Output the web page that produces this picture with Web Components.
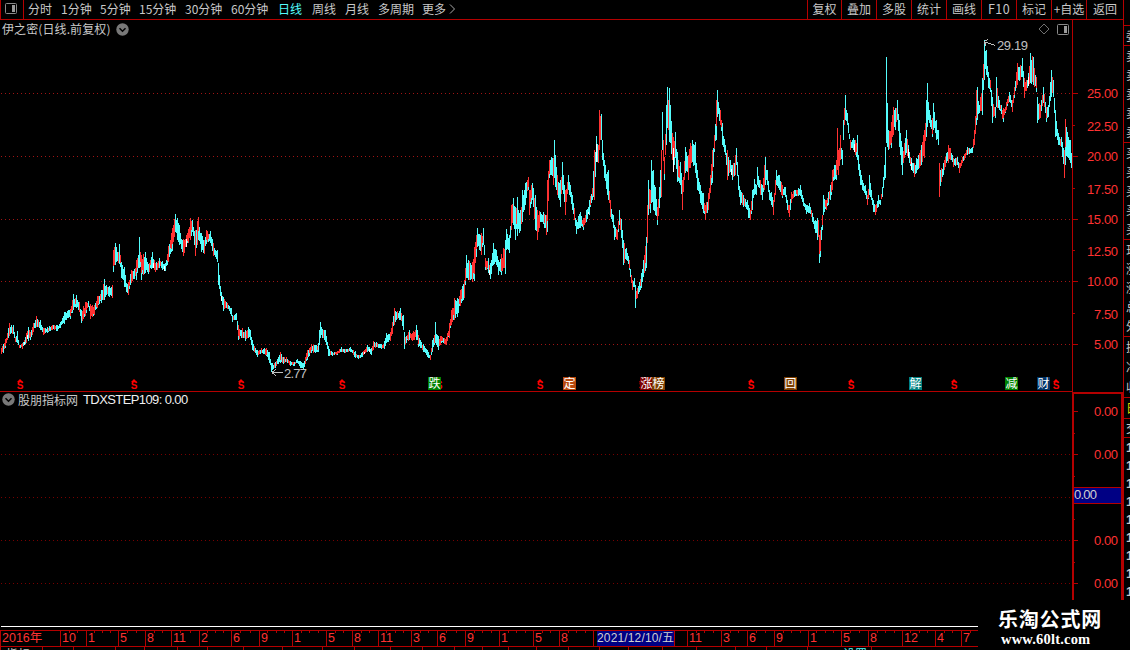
<!DOCTYPE html>
<html lang="zh-CN">
<head>
<meta charset="utf-8">
<title>伊之密 日线</title>
<style>
    body {
        margin: 0;
        background: #000;
        overflow: hidden;
    }
</style>
</head>
<body>
<stock-terminal></stock-terminal>
<script>
const RED = '#b40000';

// [x, high, low] of the price range, in chart pixels
const PRICES = `1 348 354,3 344 353,5 339 348,9 323 336,13 325 334,15 337 342,17 331 343,19 345 348,22 343 349,26 333 343,28 327 341,30 332 340,33 323 332,36 316 327,40 320 330,43 328 335,47 327 333,52 325 330,57 325 331,60 322 328,64 312 324,68 310 318,70 309 319,73 294 310,76 295 308,79 302 312,81 310 323,85 302 316,88 301 307,90 304 319,94 305 315,97 296 308,101 290 303,104 279 300,106 285 295,109 286 297,112 285 298,113 250 272,115 243 265,118 252 263,119 244 264,121 262 278,124 267 287,126 283 292,128 282 295,131 270 283,134 269 279,136 260 280,138 255 268,139 237 268,141 255 280,145 252 273,148 264 274,152 252 268,155 263 272,159 258 268,162 261 270,165 263 271,168 246 262,172 228 251,175 214 232,177 218 240,179 225 245,181 239 249,183 239 256,186 235 247,190 218 240,192 220 232,195 230 256,198 217 240,201 233 252,204 240 254,206 230 244,210 231 243,213 243 256,217 250 262,218 263 285,220 286 296,223 297 311,227 303 309,231 308 316,232 315 322,236 313 320,238 325 340,242 328 338,245 330 341,248 327 338,250 330 340,252 340 350,257 350 357,261 348 353,266 348 356,269 352 363,271 363 372,275 362 368,278 357 364,280 352 363,283 357 364,286 357 362,290 361 366,294 362 366,297 359 363,300 361 368,303 363 370,307 350 360,311 344 353,315 345 353,318 343 352,319 330 345,320 322 338,322 329 338,325 330 342,328 346 356,332 352 356,337 351 355,341 347 352,345 349 353,350 347 352,355 351 358,358 355 359,362 352 357,367 345 352,371 348 355,373 341 350,376 342 347,381 344 349,384 341 349,386 333 343,390 332 341,392 322 334,394 308 325,397 311 319,400 308 320,403 315 330,404 332 349,406 336 343,409 330 340,412 333 341,416 325 340,418 335 347,423 344 352,427 350 357,430 355 360,432 340 352,434 335 345,435 322 343,436 334 345,438 336 350,441 336 343,446 337 345,449 323 338,451 310 325,454 298 320,457 298 317,460 290 306,464 280 298,466 255 278,468 260 280,472 262 282,474 247 281,477 228 247,481 233 255,483 228 245,485 258 270,488 258 273,490 263 279,493 243 265,496 250 265,498 260 275,501 254 275,505 240 274,506 229 250,509 235 253,511 205 230,513 198 225,515 207 240,517 197 236,520 210 231,522 190 222,525 183 205,528 177 190,529 190 215,532 183 200,535 195 230,537 210 240,540 212 222,543 212 224,546 215 235,547 180 232,549 160 178,551 157 175,553 158 185,554 140 178,555 155 187,557 175 195,560 180 207,562 162 190,565 190 215,568 175 190,572 195 210,576 220 234,580 212 228,583 218 230,586 210 222,589 200 215,592 188 200,594 150 200,596 136 162,598 145 163,599 110 150,601 114 140,602 140 160,604 160 178,607 172 195,608 170 200,610 200 217,613 215 228,614 225 240,617 230 240,619 210 225,621 219 238,623 240 265,626 248 260,629 260 270,632 280 290,634 278 287,635 285 308,637 288 298,639 282 292,641 273 288,643 260 277,646 237 268,647 205 243,648 180 215,650 190 213,651 160 203,653 170 210,655 187 215,657 207 225,659 187 208,661 150 197,662 112 150,664 157 180,666 105 145,667 87 128,668 100 130,669 88 142,672 133 160,673 137 172,675 132 158,677 152 182,680 162 185,682 180 210,685 147 173,688 155 180,690 143 168,692 140 162,695 142 173,697 170 190,700 185 203,703 193 213,705 205 220,708 193 210,710 175 193,712 150 183,714 135 152,716 100 140,717 90 117,720 110 125,722 123 145,725 145 155,727 150 180,730 160 172,732 165 180,735 155 175,736 148 165,738 175 190,740 190 205,743 195 207,747 200 210,748 205 218,750 210 220,752 190 210,754 179 195,756 185 195,757 167 185,760 180 195,762 185 200,764 165 190,765 157 185,767 170 185,769 190 200,771 192 205,773 200 215,775 180 195,776 170 185,779 175 190,782 185 198,785 187 197,787 200 210,789 205 217,791 192 203,794 190 197,798 188 196,800 185 196,803 198 206,806 205 214,809 203 213,812 213 222,815 220 233,817 218 240,818 220 237,819 235 263,820 230 257,822 215 230,823 195 215,826 200 210,828 192 205,830 185 200,832 170 190,834 165 180,836 160 180,837 128 170,838 150 175,840 135 160,842 150 165,843 120 140,845 95 120,847 113 125,850 140 150,853 138 150,855 140 155,857 135 160,858 155 170,860 170 185,862 180 190,865 185 195,867 195 205,869 175 195,871 190 200,873 200 212,875 205 215,878 195 207,880 200 205,882 187 197,884 165 180,885 147 178,886 57 143,887 103 147,888 130 150,891 122 148,893 107 135,895 108 130,897 100 120,899 120 147,902 147 175,904 143 158,906 130 153,909 152 163,911 158 170,914 163 177,916 158 173,919 153 168,921 145 165,924 130 158,926 100 137,927 83 127,929 110 123,932 118 137,933 103 130,936 120 140,938 130 145,939 163 197,941 168 182,943 163 175,946 153 163,948 145 163,950 148 160,953 158 167,957 157 165,959 163 173,962 157 163,967 147 155,972 147 153,974 130 145,976 90 125,977 87 120,979 105 113,982 78 115,984 40 80,986 50 75,988 72 88,990 80 92,992 97 123,995 107 118,996 77 107,999 100 110,1003 108 122,1006 102 110,1009 92 102,1012 100 112,1014 87 98,1017 63 85,1020 65 80,1022 58 77,1024 78 98,1027 80 88,1030 53 83,1033 57 85,1036 77 92,1037 97 123,1040 105 118,1043 87 103,1046 107 122,1048 105 117,1051 70 97,1053 80 97,1055 110 137,1058 133 145,1061 137 147,1064 150 178,1065 119 165,1068 137 158,1070 140 163,1071 153 168`
    .split(',').map(row => row.split(' ').map(Number));

const BADGES = [
    [428, '跌', '#008000'], [563, '定', '#b8480c'], [640, '涨', '#7e0000'], [652, '榜', '#7e3f00'],
    [784, '回', '#7e3f00'], [909, '解', '#008080'], [1005, '减', '#008000'], [1037, '财', '#003366']
];

const DIVIDENDS = [20, 134, 241, 342, 439, 540, 642, 751, 851, 954, 1056];

// [x, label, months up to the next label]
const MONTHS = [
    [0, '2016年', 0], [60, '10', 3], [86, '1', 4], [118, '5', 3], [145, '8', 3], [171, '11', 3], [199, '2', 4],
    [231, '6', 3], [259, '9', 4], [292, '1', 4], [326, '5', 3], [352, '8', 3], [378, '11', 4], [411, '3', 3],
    [437, '6', 3], [465, '9', 4], [499, '1', 4], [533, '5', 3], [559, '8', 4], [593, '', 0], [687, '11', 4],
    [721, '3', 3], [747, '6', 3], [774, '9', 4], [808, '1', 4], [841, '5', 3], [868, '8', 4], [902, '12', 4],
    [935, '4', 3], [961, '7', 2], [978, '', 0]
];

class BaseElement extends HTMLElement {
    constructor() {
        super();
        this.attachShadow({mode: 'open'});
        this.shadowRoot.innerHTML = this.render();
    }
}

class ToggleDot extends BaseElement {
    render() {
        return `
            <style>
                :host { display: block; width: 13px; height: 13px; }
                svg { display: block; }
            </style>
            <svg width="13" height="13" viewBox="0 0 13 13">
                <circle cx="6.5" cy="6.5" r="6.2" fill="#787878"/>
                <path d="M3.5 5.2L6.5 8.2L9.5 5.2" fill="none" stroke="#000" stroke-width="1.5"/>
            </svg>
        `;
    }
}

class PanelIcon extends BaseElement {
    render() {
        return `
            <style>
                :host { display: block; width: 12px; height: 11px; }
                svg { display: block; }
            </style>
            <svg width="12" height="11" viewBox="0 0 12 11">
                <rect x=".5" y=".5" width="11" height="10" rx="1" fill="none" stroke="#8a8a8a"/>
                <path d="M7 2h3v7H7z" fill="#9a9a9a"/>
            </svg>
        `;
    }
}

class TopBar extends BaseElement {
    render() {
        const periods = [['分时', 33], ['1分钟', 39], ['5分钟', 39], ['15分钟', 46], ['30分钟', 46], ['60分钟', 47],
            ['日线', 34], ['周线', 33], ['月线', 33], ['多周期', 44], ['更多', 27]];
        const tools = [['复权', 34], ['叠加', 35], ['多股', 35], ['统计', 35], ['画线', 35], ['F10', 35],
            ['标记', 35], ['+自选', 35], ['返回', 37]];
        return `
            <style>
                :host {
                    display: flex;
                    height: 20px;
                    box-sizing: border-box;
                    border-bottom: 1px solid ${RED};
                    line-height: 18px;
                }
                .menu {
                    width: 24px;
                    box-sizing: border-box;
                    border: solid ${RED};
                    border-width: 0 1px;
                    padding: 3px 0 0 4px;
                    margin-right: 4px;
                }
                .period, .tool { flex: none; white-space: nowrap; }
                .period.active { color: #54fcfc; }
                .more { padding-top: 4px; flex: 1; }
                .more svg { display: block; }
                .tools { display: flex; width: 316px; }
                .tool {
                    box-sizing: border-box;
                    border-left: 1px solid ${RED};
                    text-align: center;
                }
                .digits { font-size: 12.5px; letter-spacing: .4px; }
            </style>
            <div class="menu"><panel-icon></panel-icon></div>
            ${periods.map(([label, width]) => `<span class="period ${label === '日线' ? 'active' : ''}" style="width:${width}px">${label}</span>`).join('')}
            <div class="more"><svg width="8" height="10"><path d="M1 .5L5.5 5L1 9.5" fill="none" stroke="#a8a8a8"/></svg></div>
            <div class="tools">
                ${tools.map(([label, width]) => `<span class="tool ${label === 'F10' ? 'digits' : ''}" style="width:${width}px">${label}</span>`).join('')}
            </div>
        `;
    }
}

class PriceChart extends BaseElement {
    // One bar for each pixel column; its height jitters inside the interpolated range
    bars() {
        let seed = 7;
        const random = () => (seed = (seed * 16807) % 2147483647) / 2147483647;
        const paths = {red: '', cyan: '', white: ''};
        const put = (color, x, top, bottom) => {
            paths[color] += `M${x} ${Math.round(top)}h1V${Math.round(bottom)}h-1z`;
        };
        for (let i = 0; i < PRICES.length; i++) {
            const [x, high, low] = PRICES[i];
            const [nextX, nextHigh, nextLow] = PRICES[i + 1] || [x + 1, high, low];
            const slope = (nextHigh + nextLow - high - low) / (nextX - x);
            for (let col = x; col < nextX; col++) {
                const t = (col - x) / (nextX - x);
                let top = high + (nextHigh - high) * t;
                let bottom = low + (nextLow - low) * t;
                const range = bottom - top;
                if (col !== x) {
                    top += range * random() * .3;
                    bottom -= range * random() * .25;
                }
                const rising = random() < (slope < -2 ? .7 : slope > 2 ? .14 : .4);
                put(rising ? 'red' : 'cyan', col, top, Math.max(bottom, top + 2));
                if (random() < .3) {
                    const cut = top + (bottom - top) * (.6 + random() * .25);
                    put(rising ? 'cyan' : 'red', col, cut, bottom);
                }
                if (random() < .012) {
                    put('white', col, top + range * .3, bottom);
                }
            }
        }
        return `<path d="${paths.red}" fill="#ff3232"/><path d="${paths.cyan}" fill="#54fcfc"/><path d="${paths.white}" fill="#fff"/>`;
    }

    render() {
        return `
            <style>
                :host {
                    display: block;
                    position: relative;
                    height: 372px;
                    box-sizing: border-box;
                    border-bottom: 1px solid ${RED};
                }
                .plot { position: absolute; left: 0; top: -20px; }
                .title { display: flex; justify-content: space-between; padding: 0 3px 0 2px; height: 18px; line-height: 16px; }
                .name, .tools { display: flex; align-items: center; gap: 5px; }
                .name { letter-spacing: .1px; }
                .tools { gap: 7px; }
                .badge {
                    position: absolute;
                    top: 357px;
                    width: 13px;
                    height: 13px;
                    color: #fff;
                    font-size: 12px;
                    line-height: 12px;
                    text-align: center;
                }
                .dividend {
                    position: absolute;
                    top: 359px;
                    width: 8px;
                    height: 12px;
                    color: #f00;
                    font: bold 10px/14px "Liberation Sans", sans-serif;
                    text-align: center;
                }
                .dividend::before {
                    content: "";
                    position: absolute;
                    left: 1px;
                    top: 0;
                    border: solid transparent;
                    border-width: 0 3px 3px;
                    border-bottom-color: #f00;
                }
                text { fill: #c0c0c0; font: 13px "Liberation Sans", sans-serif; }
            </style>
            <svg class="plot" width="1072" height="391" shape-rendering="crispEdges">
                ${[93, 156, 219, 281, 344].map(y => `<path d="M1 ${y}.5H1072" stroke="#a01414" stroke-dasharray="1 3"/>`).join('')}
                ${this.bars()}
                <path d="M272 372.5h11M272 372.5l4-3M272 372.5l4 3M984 41.5l11 4M984 41.5l4-2M984 41.5l2 4" fill="none" stroke="#c0c0c0"/>
                <text x="284" y="378" textLength="23">2.77</text>
                <text x="997" y="50" textLength="31">29.19</text>
            </svg>
            <div class="title">
                <div class="name"><span>伊之密(日线.前复权)</span><toggle-dot></toggle-dot></div>
                <div class="tools">
                    <svg width="12" height="12"><path d="M6 1L11 6L6 11L1 6Z" fill="none" stroke="#707070"/></svg>
                    <panel-icon></panel-icon>
                </div>
            </div>
            ${DIVIDENDS.map(x => `<span class="dividend" style="left:${x - 4}px">S</span>`).join('')}
            ${BADGES.map(([x, label, color]) => `<span class="badge" style="left:${x}px;background:${color}">${label}</span>`).join('')}
        `;
    }
}

class IndicatorPanel extends BaseElement {
    render() {
        return `
            <style>
                :host { display: block; height: 235px; }
                header { display: flex; align-items: center; height: 15px; margin-bottom: 1px; padding-left: 2px; gap: 3px; line-height: 15px; }
                .values { color: #f0f0f0; font: 13px/15px "Liberation Sans", sans-serif; letter-spacing: -.6px; margin-left: 2px; }
                svg { display: block; }
            </style>
            <header><toggle-dot></toggle-dot><span>股朋指标网</span><span class="values">TDXSTEP109: 0.00</span></header>
            <svg width="1072" height="219" shape-rendering="crispEdges">
                ${[46, 89, 132, 175].map(y => `<path d="M1 ${y}.5H1072" stroke="#780000" stroke-dasharray="1 3"/>`).join('')}
                <path d="M1 218.5H978" stroke="#fff"/>
            </svg>
        `;
    }
}

class ValueAxis extends BaseElement {
    render() {
        const prices = [['25.00', 93], ['22.50', 126], ['20.00', 156], ['17.50', 189], ['15.00', 219], ['12.50', 251],
            ['10.00', 281], ['7.50', 314], ['5.00', 344], ['0.00', 411], ['0.00', 454], ['0.00', 540], ['0.00', 583]];
        const major = [93, 156, 219, 281, 344, 411, 454, 540, 583];
        const minor = [125, 188, 250, 313, 433, 476, 519, 562];
        return `
            <style>
                :host { display: block; width: 51px; height: 580px; }
                svg { display: block; }
                text { fill: #ff3232; font: 13px "Liberation Sans", sans-serif; }
                .current { fill: #d0d0d0; }
            </style>
            <svg width="51" height="580" viewBox="1072 20 51 580" shape-rendering="crispEdges">
                <path d="M1072.5 20V392" stroke="${RED}"/>
                <path d="M1073 600V393H1122V600" fill="none" stroke="${RED}" stroke-width="2"/>
                ${major.map(y => `<path d="M1073 ${y}.5h5" stroke="${RED}"/>`).join('')}
                ${minor.map(y => `<path d="M1073 ${y}.5h2" stroke="${RED}"/>`).join('')}
                <path d="M1074 488h47v15h-47z" fill="#000084"/>
                <path d="M1074 487.5h48M1074 503.5h48" stroke="${RED}"/>
                ${prices.map(([label, y]) => {
                    const width = label.length * 7 - 4;
                    return `<text x="${1118 - width}" y="${y + 5}" textLength="${width}">${label}</text>`;
                }).join('')}
                <text class="current" x="1074" y="499" textLength="23">0.00</text>
            </svg>
        `;
    }
}

// Left edge of the quote panel; most of it runs off the window
class QuoteStrip extends BaseElement {
    render() {
        const groups = [['委', 20], ['卖卖卖卖卖', 97], ['买买买买买', 97], ['现涨涨总外', 97], ['换净收', 61]];
        return `
            <style>
                :host { display: block; width: 7px; height: 580px; overflow: hidden; border-left: 1px solid ${RED}; box-sizing: border-box; padding-top: 5px; }
                .group { display: flex; flex-direction: column; box-sizing: border-box; border-top: 1px solid ${RED}; padding-left: 2px; width: 20px; }
                .group span { flex: 1; display: flex; align-items: center; }
                .yellow { color: #d8d800; }
                .counts { font: bold 13px "Liberation Sans", sans-serif; }
                .counts span { flex: none; height: 18px; }
            </style>
            ${groups.map(([chars, height]) => `<div class="group" style="height:${height}px">${[...chars].map(c => `<span>${c}</span>`).join('')}</div>`).join('')}
            <div class="group yellow" style="height:21px"><span>日</span></div>
            <div class="group" style="height:19px"><span>交</span></div>
            <div class="group counts">${'<span>1</span>'.repeat(9)}</div>
        `;
    }
}

class TimeAxis extends BaseElement {
    render() {
        return `
            <style>
                :host {
                    display: flex;
                    position: relative;
                    width: 978px;
                    height: 17px;
                    box-sizing: border-box;
                    border: solid ${RED};
                    border-width: 1px 0;
                    color: #ff3232;
                    font: 12.5px/15px "Liberation Sans", "Noto Sans CJK SC", sans-serif;
                }
                .month {
                    flex: none;
                    display: flex;
                    box-sizing: border-box;
                    border-left: 1px solid ${RED};
                    padding-left: 1px;
                    position: relative;
                    white-space: nowrap;
                }
                .month:first-child { border: 0; letter-spacing: -.2px; }
                i { position: absolute; top: 0; width: 1px; height: 2px; background: ${RED}; }
                .cursor {
                    position: absolute;
                    left: 597px;
                    width: 77px;
                    height: 15px;
                    background: #000084;
                    color: #d0d0d0;
                    border-right: 1px solid ${RED};
                    font-size: 12px;
                    white-space: nowrap;
                    letter-spacing: .15px;
                }
            </style>
            ${MONTHS.slice(0, -1).map(([x, label, months], i) => {
                const width = MONTHS[i + 1][0] - x;
                const step = label === '7' ? 9 : width / months;
                let ticks = '';
                for (let m = 1; m < months; m++) {
                    ticks += `<i style="left:${Math.round(m * step) - 1}px"></i>`;
                }
                return `<div class="month" style="width:${width}px">${label}${ticks}</div>`;
            }).join('')}
            <div class="cursor">2021/12/10/五</div>
        `;
    }
}

// Only the top pixels of the next row fit in the window
class StatusRow extends BaseElement {
    render() {
        const edges = [0, 42, 73, 115, 144, 177, 207, 243, 282, 322, 354, 390, 422, 454, 482, 508, 536, 568, 599, 628, 662, 696, 735, 766, 807, 839, 871, 978];
        return `
            <style>
                :host { display: flex; height: 3px; overflow: hidden; width: 978px; }
                span { flex: none; box-sizing: border-box; border-left: 1px solid ${RED}; height: 3px; overflow: hidden; line-height: 14px; padding-left: 5px; white-space: nowrap; }
                .active { color: #54fcfc; border: 0; padding: 0 0 0 4px; }
            </style>
            ${edges.slice(0, -1).map((x, i) => `<span class="${x === 839 ? 'active' : ''}" style="width:${edges[i + 1] - x}px">${x === 0 ? '指标' : x === 839 ? '设置' : ''}</span>`).join('')}
        `;
    }
}

class SiteMark extends BaseElement {
    render() {
        return `
            <style>
                :host {
                    display: flex;
                    flex-direction: column;
                    width: 152px;
                    height: 50px;
                    background: #000;
                    color: #fff;
                    box-sizing: border-box;
                    padding: 6px 0 0 20px;
                    white-space: nowrap;
                }
                .name { font: bold 20px/26px "Noto Sans CJK SC", sans-serif; letter-spacing: .8px; }
                .url { font: bold 14.5px/14px "Liberation Serif", serif; letter-spacing: .2px; padding-left: 3px; }
            </style>
            <span class="name">乐淘公式网</span>
            <span class="url">www.60lt.com</span>
        `;
    }
}

class StockTerminal extends BaseElement {
    render() {
        return `
            <style>
                :host {
                    display: grid;
                    position: relative;
                    grid-template: 20px 580px 50px / 1072px 51px 7px;
                    width: 1130px;
                    height: 650px;
                    overflow: hidden;
                    background: #000;
                    color: #c8c8c8;
                    font: 12px/16px "Noto Sans CJK SC", sans-serif;
                }
                top-bar { grid-column: 1 / 3; }
                .edge { border-left: 1px solid ${RED}; }
                .charts { grid-row: 2 / 4; }
                site-mark { position: absolute; right: 0; bottom: 0; }
                time-axis { margin-top: 3px; }
            </style>
            <top-bar></top-bar>
            <div class="edge"></div>
            <div class="charts">
                <price-chart></price-chart>
                <indicator-panel></indicator-panel>
                <time-axis></time-axis>
                <status-row></status-row>
            </div>
            <value-axis></value-axis>
            <quote-strip></quote-strip>
            <site-mark></site-mark>
        `;
    }
}

customElements.define('toggle-dot', ToggleDot);
customElements.define('panel-icon', PanelIcon);
customElements.define('top-bar', TopBar);
customElements.define('price-chart', PriceChart);
customElements.define('indicator-panel', IndicatorPanel);
customElements.define('value-axis', ValueAxis);
customElements.define('quote-strip', QuoteStrip);
customElements.define('time-axis', TimeAxis);
customElements.define('status-row', StatusRow);
customElements.define('site-mark', SiteMark);
customElements.define('stock-terminal', StockTerminal);
</script>
</body>
</html>
